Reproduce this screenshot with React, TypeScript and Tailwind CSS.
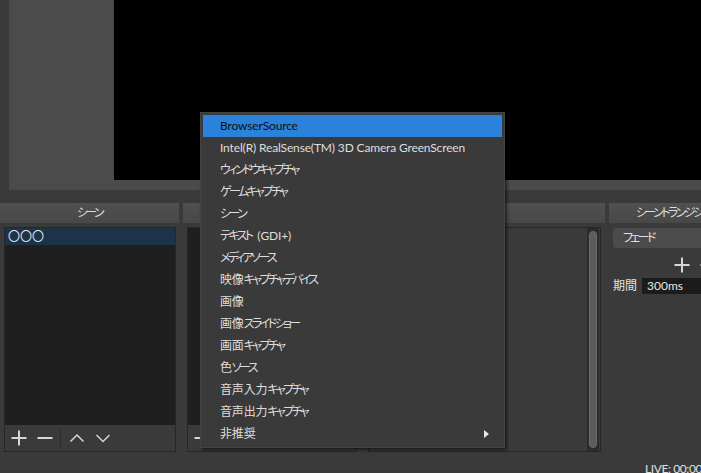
import React from "react";

const items = [
  "BrowserSource",
  "Intel(R) RealSense(TM) 3D Camera GreenScreen",
  "ウィンドウキャプチャ",
  "ゲームキャプチャ",
  "シーン",
  "テキスト (GDI+)",
  "メディアソース",
  "映像キャプチャデバイス",
  "画像",
  "画像スライドショー",
  "画面キャプチャ",
  "色ソース",
  "音声入力キャプチャ",
  "音声出力キャプチャ",
  "非推奨",
];

function J({ text }: { text: string }) {
  const parts = text.split(/([\u3040-\u30FF]+)/);
  return (
    <>
      {parts.map((p, i) =>
        /^[\u3040-\u30FF]+$/.test(p) ? (
          <span key={i} className="tracking-[-2.6px]">
            {p}
          </span>
        ) : (
          <span key={i} className={p.startsWith(" ") && i > 0 ? "tracking-[-0.15px] pl-[3px]" : "tracking-[-0.15px]"}>
            {p}
          </span>
        )
      )}
    </>
  );
}

function Plus() {
  return (
    <svg width="16" height="16" viewBox="0 0 16 16" className="shrink-0">
      <path d="M8 0.5V15.5M0.5 8H15.5" stroke="#d6d6d6" strokeWidth="2" fill="none" />
    </svg>
  );
}
function Minus() {
  return (
    <svg width="16" height="16" viewBox="0 0 16 16" className="shrink-0">
      <path d="M0.5 8H15.5" stroke="#d6d6d6" strokeWidth="2" fill="none" />
    </svg>
  );
}
function Up() {
  return (
    <svg width="16" height="16" viewBox="0 0 16 16" className="shrink-0">
      <path d="M1.5 11.5L8 5L14.5 11.5" stroke="#d6d6d6" strokeWidth="1.5" fill="none" />
    </svg>
  );
}
function Down() {
  return (
    <svg width="16" height="16" viewBox="0 0 16 16" className="shrink-0">
      <path d="M1.5 5L8 11.5L14.5 5" stroke="#d6d6d6" strokeWidth="1.5" fill="none" />
    </svg>
  );
}

function Toolbar() {
  return (
    <div className="h-[26px] flex items-center pl-[6px] bg-[#3a3a3a]">
      <Plus />
      <div className="w-[10px]" />
      <Minus />
      <div className="w-[7px]" />
      <div className="w-px h-[18px] bg-[#2e2e2e]" />
      <div className="w-[8px]" />
      <Up />
      <div className="w-[10px]" />
      <Down />
    </div>
  );
}

function Title({ children, className = "" }: { children?: React.ReactNode; className?: string }) {
  return (
    <div
      className={
        "h-[20px] bg-gradient-to-b from-[#505050] to-[#484848] text-[12px] leading-[20px] text-[#dcdcdc] " +
        className
      }
    >
      {children}
    </div>
  );
}

export default function App() {
  return (
    <div className="relative w-[701px] h-[473px] overflow-hidden bg-[#3a3a3a] font-['Lato','Noto_Sans_CJK_JP',sans-serif] [font-feature-settings:'palt'] text-[#dedede]">
      {/* preview */}
      <div className="h-[190px] pl-[9px]">
        <div className="h-full bg-[#4b4b4b] pl-[105px] pb-[10px]">
          <div className="h-full bg-black" />
        </div>
      </div>

      {/* docks */}
      <div className="mt-[13px] flex gap-[4px] h-[249px]">
        {/* scenes */}
        <div className="w-[179px] shrink-0 flex flex-col">
          <Title className="text-center">
            <J text="シーン" />
          </Title>
          <div className="pt-[4px] pl-[4px] pr-[3px]">
            <div className="border border-[#262626] flex flex-col h-[225px]">
              <div className="h-[197px] bg-[#1f1f1f]">
                <div className="h-[17px] bg-[#1c3349] pl-[3px] text-[12px] leading-[17px] text-[#e6e6e6]">
                  〇〇〇
                </div>
              </div>
              <Toolbar />
            </div>
          </div>
        </div>

        {/* sources */}
        <div className="w-[177px] shrink-0 flex flex-col">
          <Title className="text-center">
            <J text="ソース" />
          </Title>
          <div className="pt-[4px] pl-[4px] pr-[4px]">
            <div className="border border-[#262626] flex flex-col h-[225px]">
              <div className="h-[197px] bg-[#1f1f1f]" />
              <Toolbar />
            </div>
          </div>
        </div>

        {/* mixer */}
        <div className="w-[241px] shrink-0 flex flex-col">
          <Title />
          <div className="pt-[4px] pl-[4px] pr-[4px]">
            <div className="border border-[#262626] flex h-[225px] bg-[#3a3a3a]">
              <div className="flex-1" />
              <div className="w-[12px] bg-[#2c2c2c] py-[3px] px-[2px] mr-[1px]">
                <div className="h-full rounded-full bg-[#5c5c5c] border border-[#6a6a6a]" />
              </div>
            </div>
          </div>
        </div>

        {/* transitions */}
        <div className="w-[180px] shrink-0 flex flex-col">
          <Title className="pl-[27px] whitespace-nowrap">
            <J text="シーントランジション" />
          </Title>
          <div className="pt-[5px] pl-[4px]">
            <div className="h-[20px] rounded-[3px] bg-[#4b4b4b] pl-[10px] text-[12px] leading-[20px] text-[#e0e0e0]">
              <J text="フェード" />
            </div>
            <div className="mt-[9px] h-[16px] flex gap-[10px] pl-[61px]">
              <Plus />
              <Minus />
            </div>
            <div className="mt-[5px] flex items-center h-[16px] text-[12px]">
              <span className="w-[29px] text-[#e0e0e0]">期間</span>
              <div className="flex-1 h-[16px] bg-[#1b1b1b] pl-[5px] leading-[16px] text-[#e6e6e6]">300ms</div>
            </div>
          </div>
        </div>
      </div>

      {/* status bar */}
      <div className="pl-[645px] pt-[9px] text-[12px] leading-[16px] tracking-[-0.4px] text-[#e0e0e0] whitespace-nowrap">
        LIVE: 00:00:00
      </div>

      {/* context menu */}
      <div className="absolute left-[200px] top-[112px] w-[305px] bg-[#3a3a3a] border border-[#444444] p-[2px] shadow-[2px_2px_3px_rgba(0,0,0,0.55)]">
        {items.map((t, i) => (
          <div
            key={t}
            className={
              "relative h-[22px] pl-[17px] text-[12px] leading-[22px] whitespace-nowrap " +
              (i === 0 ? "bg-[#2a82da] text-[#101010]" : "text-[#dedede]")
            }
          >
            <J text={t} />
            {i === items.length - 1 && (
              <svg width="5" height="8" viewBox="0 0 5 8" className="absolute right-[13px] top-[7px]">
                <path d="M0 0L5 4L0 8Z" fill="#e6e6e6" />
              </svg>
            )}
          </div>
        ))}
      </div>
    </div>
  );
}
